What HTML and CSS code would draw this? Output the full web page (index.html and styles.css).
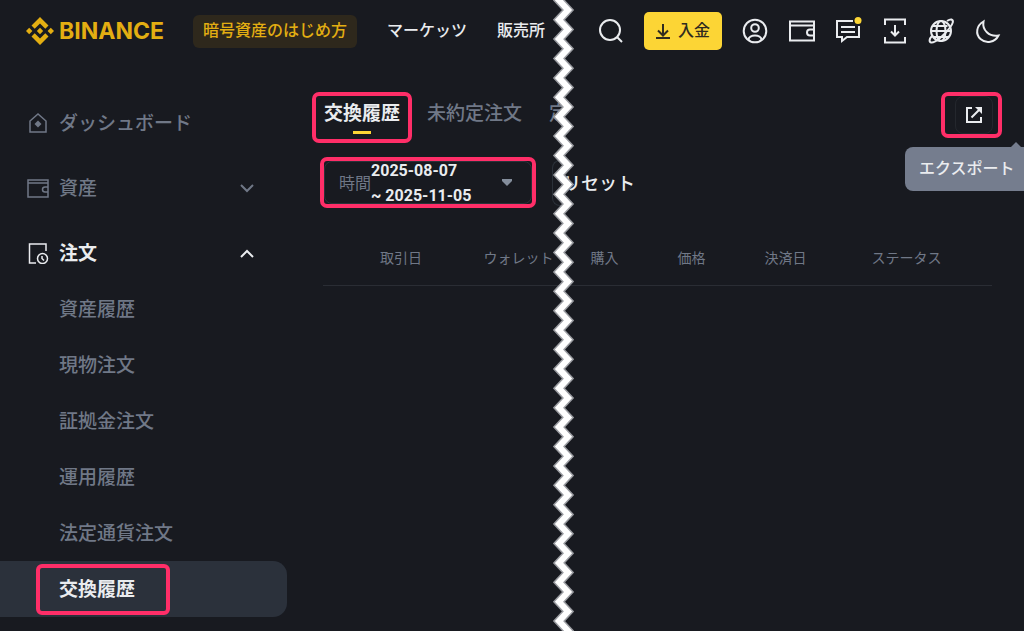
FILE: index.html
```html
<!DOCTYPE html>
<html lang="ja">
  <head>
    <meta charset="UTF-8">
    <meta name="viewport" content="width=device-width, initial-scale=1.0">
    <title>交換履歴 | BINANCE</title>
    <link rel="stylesheet" href="styles.css">
  </head>
  <body>
    <header class="topbar">
      <a href="#" class="logo">
        <svg width="28" height="28" viewBox="0 0 28 28" fill="currentColor">
          <path d="M14 0l8.500 8.500-3.200 3.200L14 6.400l-5.300 5.300-3.200-3.200z" />
          <path d="M14 28l8.500-8.500-3.200-3.200L14 21.600l-5.300-5.300-3.200 3.200z" />
          <path d="M14 10.800l3.200 3.200-3.200 3.200-3.200-3.200z" />
          <path d="M3.200 10.800L6.400 14l-3.200 3.200L0 14z" />
          <path d="M24.800 10.800L28 14l-3.200 3.200-3.200-3.200z" />
        </svg>
        <span>BINANCE</span>
      </a>
      <nav class="topnav">
        <a href="#" class="beginner">暗号資産のはじめ方</a>
        <a href="#">マーケッツ</a>
        <a href="#">販売所</a>
      </nav>
      <div class="tools">
        <button class="icon" aria-label="検索">
          <svg viewBox="0 0 26 26"><circle cx="12" cy="12" r="10" /><path d="M19 19l5 5" /></svg>
        </button>
        <button class="deposit">
          <svg width="14" height="18" viewBox="0 0 14 18"><path d="M7 2v11M2 8.500l5 5 5-5M0 16h14" /></svg>
          <span>入金</span>
        </button>
        <div class="icons">
          <button class="icon" aria-label="アカウント">
            <svg viewBox="0 0 26 26"><circle cx="13" cy="13" r="11.300" /><circle cx="13" cy="10" r="3.800" /><path d="M6.500 22c0-6 13-6 13 0" /></svg>
          </button>
          <button class="icon" aria-label="ウォレット">
            <svg viewBox="0 0 26 26"><path d="M1 3.500h24v19H1zM1 7.500h24M25 11.500h-4a3 3 0 0 0 0 6h4" /></svg>
          </button>
          <button class="icon" aria-label="チャット">
            <svg viewBox="0 0 26 26"><path d="M18 3H2v16h5v4l5-4h12V8M6 9h14M6 14h14" /><circle class="dot" cx="23" cy="2.500" r="3.500" /></svg>
          </button>
          <button class="icon" aria-label="ダウンロード">
            <svg viewBox="0 0 26 26"><path d="M3 7V1.500h20V7M3 19v5.500h20V19M13 7v10M9 13.500l4 4 4-4" /></svg>
          </button>
          <button class="icon" aria-label="言語">
            <svg viewBox="0 0 26 26"><circle cx="13" cy="13" r="10" /><ellipse cx="13" cy="13" rx="4.500" ry="10" /><path d="M3 13h20M4.500 8h15M6 19h15M4 18c-3 3-3 6-1 6.500 4 1 14-8 19-15 3-4 4-7 1.500-8-1-.3-3 .5-4.500 1.500" /></svg>
          </button>
          <button class="icon" aria-label="ダークモード">
            <svg viewBox="0 0 26 26"><path d="M8.500 3.500C7 12 14 19 23.500 17.500 20 24.500 11 26 5.500 21S1.500 7.500 8.500 3.500z" /></svg>
          </button>
        </div>
      </div>
    </header>

    <div class="layout">
      <nav class="sidebar">
        <a href="#" class="item">
          <svg width="22" height="22" viewBox="0 0 22 22"><path d="M3 9l8-7 8 7v11H3z" /><path class="solid" d="M11 8.500l3.500 3.500-3.500 3.500L7.500 12z" /></svg>
          <span>ダッシュボード</span>
        </a>
        <a href="#" class="item">
          <svg width="22" height="22" viewBox="0 0 22 22"><path d="M1 3h20v17H1zM1 6h20M21 10h-3a2.500 2.500 0 0 0 0 5h3" /></svg>
          <span>資産</span>
          <svg class="chevron" width="14" height="14" viewBox="0 0 14 14"><path d="M1 4l6 6 6-6" /></svg>
        </a>
        <a href="#" class="item open">
          <svg width="22" height="22" viewBox="0 0 22 22"><path d="M9 21H2.500V2H19v7" /><circle cx="15.500" cy="16.500" r="5" /><path d="M15 14v2.500l2 2" /></svg>
          <span>注文</span>
          <svg class="chevron" width="14" height="14" viewBox="0 0 14 14"><path d="M1 11l6-6 6 6" /></svg>
        </a>
        <div class="sub">
          <a href="#">資産履歴</a>
          <a href="#">現物注文</a>
          <a href="#">証拠金注文</a>
          <a href="#">運用履歴</a>
          <a href="#">法定通貨注文</a>
          <a href="#" class="current"><span class="mark">交換履歴</span></a>
        </div>
      </nav>

      <main class="content">
        <div class="head">
          <div class="tabs">
            <button class="tab active">交換履歴</button>
            <button class="tab">未約定注文</button>
            <button class="tab">定</button>
          </div>
          <button class="export-box" aria-label="エクスポート">
            <span class="export-btn">
              <svg width="18" height="18" viewBox="0 0 18 18"><path d="M7 2H2v14h14v-5M6.500 11.500L14 4" /><path class="solid" d="M10 1h7v7z" /></svg>
            </span>
          </button>
        </div>

        <div class="filters">
          <button class="period">
            <span class="period-in">
              <span class="label">時間</span>
              <span class="dates">2025-08-07<br>~ 2025-11-05</span>
              <svg class="caret" width="10" height="7" viewBox="0 0 10 7"><path d="M0 0h10v2L5 7 0 2z" /></svg>
            </span>
          </button>
          <button class="reset">リセット</button>
        </div>

        <table class="history">
          <thead>
            <tr>
              <th class="date">取引日</th>
              <th class="mid">ウォレット</th>
              <th class="short">購入</th>
              <th class="short">価格</th>
              <th class="mid">決済日</th>
              <th>ステータス</th>
            </tr>
          </thead>
        </table>

        <div class="tooltip" role="tooltip">エクスポート</div>
      </main>
    </div>

    <!-- torn edge between the two halves -->
    <svg class="tear" width="24" height="100%">
      <defs>
        <pattern id="zigzag" width="24" height="97" patternUnits="userSpaceOnUse">
          <path class="edge" d="M7 -19L16 -9.400 7 .3 16 10 7 19.700 16 29.400 7 39.100 16 48.800 7 58.500 16 68.200 7 77.900 16 87.600 7 97.300 16 107" />
          <path class="paper" d="M7 -19L16 -9.400 7 .3 16 10 7 19.700 16 29.400 7 39.100 16 48.800 7 58.500 16 68.200 7 77.900 16 87.600 7 97.300 16 107" />
        </pattern>
      </defs>
      <rect width="24" height="100%" fill="url(#zigzag)" />
    </svg>
  </body>
</html>
```
FILE: styles.css
```css
* {
  box-sizing: border-box;
}
body {
  margin: 0;
  min-height: 100vh;
  position: relative;
  overflow: hidden;
  background-color: #181a20;
  color: #eaecef;
  font-family: "Noto Sans CJK JP", sans-serif;
  font-size: 16px;
}
a {
  color: inherit;
  text-decoration: none;
}
button {
  margin: 0;
  padding: 0;
  border: none;
  background: none;
  color: inherit;
  font: inherit;
  cursor: pointer;
}
svg {
  flex: none;
  fill: none;
  stroke: currentColor;
  stroke-width: 2;
}
svg .solid {
  fill: currentColor;
  stroke: none;
}

/* top bar */
.topbar {
  display: flex;
  align-items: center;
  height: 62px;
  padding: 0 23px 0 26px;
}
.logo {
  display: flex;
  align-items: center;
  gap: 5px;
  width: 167px;
  color: #e3ae12;
  font-family: Inter, sans-serif;
  font-size: 23px;
  font-weight: 700;
}
.logo svg {
  fill: currentColor;
  stroke: none;
}
.topnav {
  display: flex;
  align-items: center;
  gap: 30px;
  font-weight: 500;
  white-space: nowrap;
}
.topnav a {
  padding-bottom: 4px;
  line-height: 29px;
}
.topnav .beginner {
  padding: 0 10px 4px;
  border-radius: 6px;
  background-color: #2e281c;
  color: #e3ae12;
}
.tools {
  display: flex;
  align-items: center;
  gap: 20px;
  margin-left: auto;
}
.icons {
  display: flex;
  justify-content: space-between;
  width: 259px;
}
.icon {
  width: 26px;
  height: 26px;
}
.icon svg {
  display: block;
  width: 26px;
  height: 26px;
  overflow: visible;
}
.icon .dot {
  fill: #fcd535;
  stroke: none;
}
.deposit {
  display: flex;
  align-items: center;
  justify-content: center;
  gap: 8px;
  width: 78px;
  height: 38px;
  border-radius: 5px;
  background-color: #fcd535;
  color: #302b1f;
  font-weight: 500;
}
.deposit span {
  padding-bottom: 4px;
}

/* sidebar */
.layout {
  display: flex;
}
.sidebar {
  flex: none;
  width: 287px;
  padding-top: 33px;
  color: #707887;
  font-size: 19px;
  font-weight: 500;
}
.item {
  display: flex;
  align-items: center;
  gap: 10px;
  height: 56px;
  margin-bottom: 9px;
  padding: 0 33px 0 27px;
}
.item span {
  padding-bottom: 3px;
}
.item svg {
  stroke-width: 1.5;
}
.item .chevron {
  margin-left: auto;
  stroke-width: 2;
}
.item.open {
  margin-bottom: 0;
  color: #eaecef;
  font-weight: 700;
}
.sub a {
  display: flex;
  align-items: center;
  height: 56px;
  padding: 0 0 4px 59px;
}
.sub .current {
  padding: 0 0 0 36px;
  border-radius: 0 14px 14px 0;
  background-color: #2b313b;
  color: #eaecef;
  font-weight: 700;
}
.mark {
  width: 134px;
  padding: 0 19px 4px;
  border: 4px solid #ff2e68;
  border-radius: 6px;
  line-height: 39px;
}

/* content */
.content {
  flex: 1;
  min-width: 0;
  position: relative;
  padding: 30px 22px 0 25px;
}
.head {
  display: flex;
  justify-content: space-between;
  align-items: flex-start;
}
.tabs {
  display: flex;
  gap: 3px;
}
.tab {
  height: 51px;
  padding: 0 8px;
  border: 4px solid transparent;
  border-radius: 7px;
  color: #707887;
  font-size: 19px;
  font-weight: 500;
  line-height: 20px;
  white-space: nowrap;
}
.tab::after {
  content: "";
  display: block;
  width: 18px;
  height: 3px;
  margin: 9px auto 0;
}
.tab.active {
  border-color: #ff2e68;
  color: #eaecef;
  font-weight: 700;
}
.tab.active::after {
  background-color: #fcd535;
}
.export-box {
  display: flex;
  justify-content: center;
  align-items: center;
  width: 61px;
  height: 46px;
  border: 4px solid #ff2e68;
  border-radius: 7px;
}
.export-btn {
  display: flex;
  justify-content: center;
  align-items: center;
  width: 38px;
  height: 38px;
  margin-left: 4px;
  border: 1px solid #24272d;
  border-radius: 8px;
}
.tooltip {
  position: absolute;
  top: 85px;
  right: -9px;
  width: 128px;
  padding: 0 0 4px 14px;
  border-radius: 8px;
  background-color: #757d8e;
  font-weight: 500;
  line-height: 40px;
  white-space: nowrap;
}
.tooltip::before {
  content: "";
  position: absolute;
  top: -5px;
  right: 12px;
  border: 5px solid transparent;
  border-top: none;
  border-bottom-color: #757d8e;
}

/* filters */
.filters {
  display: flex;
  align-items: center;
  gap: 16px;
  margin: 14px 0 0 8px;
}
.period {
  width: 216px;
  height: 51px;
  border: 4px solid #ff2e68;
  border-radius: 7px;
}
.period-in {
  display: flex;
  align-items: center;
  height: 43px;
  padding: 0 19px 0 14px;
  border: 1px solid #2b3139;
  border-radius: 8px;
}
.period .label {
  padding-bottom: 2px;
  color: #707887;
}
.dates {
  font-family: Roboto, sans-serif;
  font-weight: 700;
  line-height: 25px;
  text-align: left;
  white-space: nowrap;
}
.caret {
  margin-left: auto;
  fill: #848e9c;
  stroke: none;
}
.reset {
  position: relative;
  height: 46px;
  padding: 0 10px 2px 11px;
  font-size: 18px;
  font-weight: 500;
}
.reset::before {
  content: "";
  position: absolute;
  top: 0;
  bottom: 0;
  left: 0;
  width: 12px;
  border: 1px solid #2b3139;
  border-right: none;
  border-radius: 8px 0 0 8px;
}

/* history table */
.history {
  width: calc(100% - 21px);
  margin: 22px 10px 0 11px;
  border-collapse: collapse;
  table-layout: fixed;
}
.history th {
  height: 55px;
  padding: 0 0 1px;
  border-bottom: 1px solid #2a2d34;
  color: #707887;
  font-size: 14px;
  font-weight: 400;
  text-align: left;
  white-space: nowrap;
}
.history .date {
  width: 24%;
  padding-left: 57px;
}
.history .mid {
  width: 16%;
}
.history .short {
  width: 13%;
}

/* torn edge */
.tear {
  position: absolute;
  top: 0;
  left: 55%;
  margin-left: -11px;
}
.tear path {
  stroke-miterlimit: 8;
}
.tear rect {
  stroke: none;
}
.edge {
  stroke: #9a9ca1;
  stroke-width: 9;
}
.paper {
  stroke: #ffffff;
  stroke-width: 6;
}
```
